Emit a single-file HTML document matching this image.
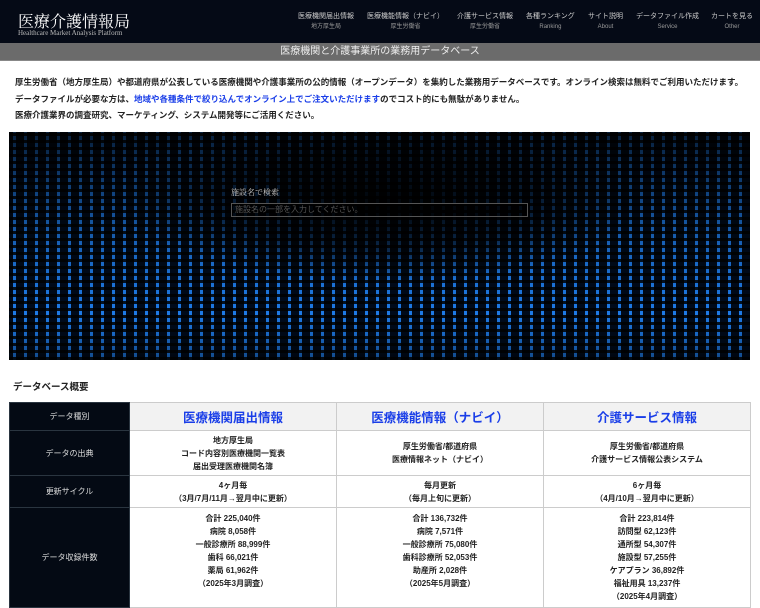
<!DOCTYPE html>
<html><head><meta charset="utf-8"><style>
*{margin:0;padding:0;box-sizing:border-box}
body{width:760px;height:600px;overflow:hidden;background:#fff;font-family:"Liberation Sans","Noto Sans CJK JP",sans-serif;color:#222}
.hd{height:43px;background:#050a16;position:relative;color:#fff}
.logo{position:absolute;left:18px;top:9px;font-size:16px;font-family:"Liberation Serif","Noto Serif CJK SC",serif}
.sub{position:absolute;left:18px;top:29px;font-size:7px;color:#bbb;font-family:"Liberation Serif",serif}
.nav div{position:absolute;top:11px;text-align:center;font-size:7px;color:#ccc;line-height:11px;white-space:nowrap}
.nav small{display:block;font-size:6px;color:#999}
.bar{height:18px;background:#6b6b6b;color:#eee;font-size:10px;text-align:center;line-height:18px;border-bottom:1px solid #888}
.intro{padding:13px 0 0 15px;font-size:8.5px;font-weight:bold;line-height:16.5px;color:#222}
.intro a{color:#1a3ee8;text-decoration:none}
.hero{position:absolute;left:9px;top:132px;width:741px;height:228px;background:#000a1a;overflow:hidden}
.rain{position:absolute;inset:0;background:
repeating-linear-gradient(0deg,rgba(0,0,0,.85) 0 3px,transparent 3px 7px),
repeating-linear-gradient(90deg,transparent 0 4px,#1e7be8 4px 7px,transparent 7px 11px);}
.shade{position:absolute;inset:0;background:radial-gradient(ellipse 260px 80px at 375px 70px,rgba(0,0,0,.95),rgba(0,0,0,.6) 60%,rgba(0,0,0,0) 100%),linear-gradient(180deg,rgba(0,0,0,.75),rgba(0,0,0,.2) 50%,rgba(0,0,0,0) 80%,rgba(0,0,0,.4))}
.srch{position:absolute;left:222px;top:55px;color:#ccc;font-size:8px;font-family:"Liberation Serif","Noto Serif CJK SC",serif}
.inp{position:absolute;left:222px;top:71px;width:297px;height:14px;border:1px solid #555;background:rgba(0,0,0,.6);color:#555;font-size:8px;padding-left:3px;line-height:12px}
h3{position:absolute;left:13px;top:379px;font-size:9.5px;font-weight:bold}
table{position:absolute;left:9px;top:402px;width:741px;border-collapse:collapse;font-size:8px;text-align:center;table-layout:fixed}
td{border:1px solid #ccc;line-height:13px;font-weight:bold}
td.k{background:#040a14;color:#ddd;border-color:#2a3540;font-weight:normal}
th{background:#f2f2f2;color:#1a3ee8;font-size:12.5px;height:28px;border:1px solid #ccc;font-weight:bold}
th.k{background:#040a14;color:#ddd;font-size:8px;font-weight:normal;border-color:#2a3540}
</style></head><body>
<div class="hd"><div class="logo">医療介護情報局</div><div class="sub">Healthcare Market Analysis Platform</div>
<div class="nav"><div style="left:298px">医療機関届出情報<small>地方厚生局</small></div><div style="left:367px">医療機能情報（ナビイ）<small>厚生労働省</small></div><div style="left:457px">介護サービス情報<small>厚生労働省</small></div><div style="left:526px">各種ランキング<small>Ranking</small></div><div style="left:588px">サイト説明<small>About</small></div><div style="left:636px">データファイル作成<small>Service</small></div><div style="left:711px">カートを見る<small>Other</small></div></div></div>
<div class="bar">医療機関と介護事業所の業務用データベース</div>
<div class="intro">厚生労働省（地方厚生局）や都道府県が公表している医療機関や介護事業所の公的情報（オープンデータ）を集約した業務用データベースです。オンライン検索は無料でご利用いただけます。<br>データファイルが必要な方は、<a>地域や各種条件で絞り込んでオンライン上でご注文いただけます</a>のでコスト的にも無駄がありません。<br>医療介護業界の調査研究、マーケティング、システム開発等にご活用ください。</div>
<div class="hero"><div class="rain"></div><div class="shade"></div><div class="srch">施設名で検索</div><div class="inp">施設名の一部を入力してください。</div></div>
<h3>データベース概要</h3>
<table>
<colgroup><col style="width:120px"><col style="width:207px"><col style="width:207px"><col style="width:207px"></colgroup>
<tr><th class="k">データ種別</th><th>医療機関届出情報</th><th>医療機能情報（ナビイ）</th><th>介護サービス情報</th></tr>
<tr style="height:45px"><td class="k">データの出典</td><td>地方厚生局<br>コード内容別医療機関一覧表<br>届出受理医療機関名簿</td><td>厚生労働省/都道府県<br>医療情報ネット（ナビイ）</td><td>厚生労働省/都道府県<br>介護サービス情報公表システム</td></tr>
<tr style="height:32px"><td class="k">更新サイクル</td><td>4ヶ月毎<br>（3月/7月/11月→翌月中に更新）</td><td>毎月更新<br>（毎月上旬に更新）</td><td>6ヶ月毎<br>（4月/10月→翌月中に更新）</td></tr>
<tr style="height:100px;vertical-align:top"><td class="k" style="vertical-align:middle">データ収録件数</td><td style="padding-top:4px">合計 225,040件<br>病院 8,058件<br>一般診療所 88,999件<br>歯科 66,021件<br>薬局 61,962件<br>（2025年3月調査）</td><td style="padding-top:4px">合計 136,732件<br>病院 7,571件<br>一般診療所 75,080件<br>歯科診療所 52,053件<br>助産所 2,028件<br>（2025年5月調査）</td><td style="padding-top:4px">合計 223,814件<br>訪問型 62,123件<br>通所型 54,307件<br>施設型 57,255件<br>ケアプラン 36,892件<br>福祉用具 13,237件<br>（2025年4月調査）</td></tr>
</table>
</body></html>
